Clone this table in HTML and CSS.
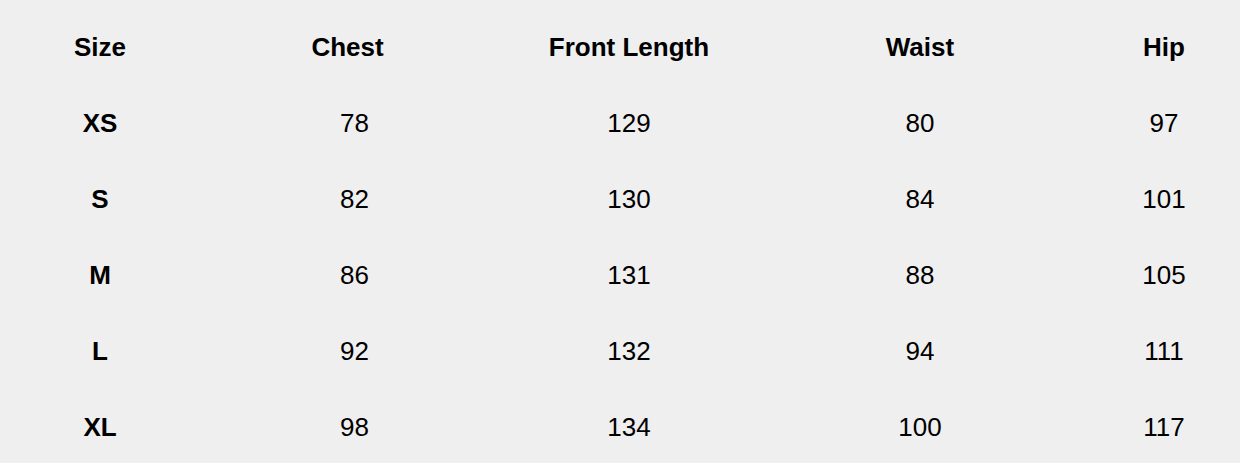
FILE: index.html
```html
<!DOCTYPE html>
<html lang="en">
<head>
<meta charset="utf-8">
<title>Size Chart</title>
<link rel="stylesheet" href="styles.css">
</head>
<body>
<div class="chart">
  <div class="row head">
    <div class="cell">Size</div>
    <div class="cell chest-h">Chest</div>
    <div class="cell">Front Length</div>
    <div class="cell">Waist</div>
    <div class="cell hip">Hip</div>
  </div>
  <div class="row">
    <div class="cell size">XS</div>
    <div class="cell chest-d">78</div>
    <div class="cell">129</div>
    <div class="cell">80</div>
    <div class="cell hip">97</div>
  </div>
  <div class="row">
    <div class="cell size">S</div>
    <div class="cell chest-d">82</div>
    <div class="cell">130</div>
    <div class="cell">84</div>
    <div class="cell hip">101</div>
  </div>
  <div class="row">
    <div class="cell size">M</div>
    <div class="cell chest-d">86</div>
    <div class="cell">131</div>
    <div class="cell">88</div>
    <div class="cell hip">105</div>
  </div>
  <div class="row">
    <div class="cell size">L</div>
    <div class="cell chest-d">92</div>
    <div class="cell">132</div>
    <div class="cell">94</div>
    <div class="cell hip">111</div>
  </div>
  <div class="row">
    <div class="cell size">XL</div>
    <div class="cell chest-d">98</div>
    <div class="cell">134</div>
    <div class="cell">100</div>
    <div class="cell hip">117</div>
  </div>
</div>
</body>
</html>
```
FILE: styles.css
```css
html, body {
  margin: 0;
  padding: 0;
  background: #efefef;
}
body {
  width: 1240px;
  height: 463px;
  overflow: hidden;
  font-family: "Liberation Sans", Arial, sans-serif;
  color: #000;
}
.chart {
  padding-top: 9px;
  display: flex;
  flex-direction: column;
}
.row {
  display: grid;
  grid-template-columns: 200px 300px 258px 324px 158px;
  height: 76px;
  align-items: center;
  justify-items: center;
  font-size: 26px;
  line-height: 30px;
}
.row.head {
  font-weight: bold;
}
.cell.size {
  font-weight: bold;
}
.cell.chest-h {
  padding-right: 5px;
}
.cell.chest-d {
  padding-left: 9px;
}
.cell.hip {
  padding-left: 6px;
}
```
